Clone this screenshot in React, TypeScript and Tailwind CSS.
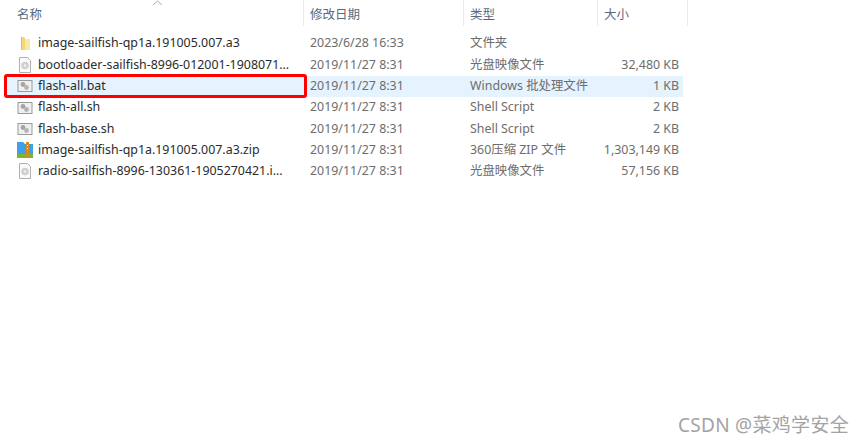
const FONT = "font-['Noto_Sans','Noto_Sans_CJK_SC',sans-serif]";

type Kind = 'folder' | 'disc' | 'script' | 'zip';

interface Row {
  name: string;
  date: string;
  type: string;
  size?: string;
  kind: Kind;
  selected?: boolean;
}

const ROWS: Row[] = [
  { name: 'image-sailfish-qp1a.191005.007.a3', date: '2023/6/28 16:33', type: '文件夹', kind: 'folder' },
  { name: 'bootloader-sailfish-8996-012001-1908071...', date: '2019/11/27 8:31', type: '光盘映像文件', size: '32,480 KB', kind: 'disc' },
  { name: 'flash-all.bat', date: '2019/11/27 8:31', type: 'Windows 批处理文件', size: '1 KB', kind: 'script', selected: true },
  { name: 'flash-all.sh', date: '2019/11/27 8:31', type: 'Shell Script', size: '2 KB', kind: 'script' },
  { name: 'flash-base.sh', date: '2019/11/27 8:31', type: 'Shell Script', size: '2 KB', kind: 'script' },
  { name: 'image-sailfish-qp1a.191005.007.a3.zip', date: '2019/11/27 8:31', type: '360压缩 ZIP 文件', size: '1,303,149 KB', kind: 'zip' },
  { name: 'radio-sailfish-8996-130361-1905270421.i...', date: '2019/11/27 8:31', type: '光盘映像文件', size: '57,156 KB', kind: 'disc' },
];

function FileIcon({ kind }: { kind: Kind }) {
  if (kind === 'folder') {
    return (
      <svg width="16" height="16" viewBox="0 0 16 16">
        <path d="M4 1h3l1 1v12H4z" fill="#f5d67a" />
        <path d="M8 3h5v11H8z" fill="#fbe7a6" />
        <path d="M4 1h1v13H4z" fill="#e8bd52" />
      </svg>
    );
  }
  if (kind === 'disc') {
    return (
      <svg width="16" height="16" viewBox="0 0 16 16">
        <path d="M2.5 0.5h8l3 3v12h-11z" fill="#fafafa" stroke="#b0b0b0" />
        <circle cx="8" cy="8.5" r="3.8" fill="#cfcfcf" />
        <circle cx="8" cy="8.5" r="1.2" fill="#f4f4f4" />
      </svg>
    );
  }
  if (kind === 'script') {
    return (
      <svg width="16" height="16" viewBox="0 0 16 16">
        <rect x="1" y="2.5" width="14" height="11" fill="#f0f0f0" stroke="#9a9a9a" />
        <circle cx="6" cy="6.5" r="2.4" fill="#a4a4a4" />
        <circle cx="9.5" cy="9.5" r="2.4" fill="#b4b4b4" />
      </svg>
    );
  }
  return (
    <svg width="16" height="16" viewBox="0 0 16 16">
      <path d="M0 0h6l2 2h8v11H0z" fill="#3f9fe8" />
      <path d="M0 12h16v4H0z" fill="#76b82a" />
      <path d="M9 0h3v16H9z" fill="#d98a1f" />
      <path d="M10 3h1v1h-1zM10 6h1v1h-1z" fill="#fff3c4" />
    </svg>
  );
}

function HeaderCell({ label, className }: { label: string; className: string }) {
  return (
    <div className={`h-[26px] border-r border-[#ebebeb] flex items-center pt-[4px] text-[12.5px] text-[#5a6a7e] ${className}`}>
      {label}
    </div>
  );
}

export default function App() {
  return (
    <div className={`relative w-[865px] h-[444px] overflow-hidden bg-white ${FONT}`}>
      <div className="grid grid-cols-[304px_160px_134px_90px] w-[688px]">
        <HeaderCell label="名称" className="pl-[17px]" />
        <HeaderCell label="修改日期" className="pl-[6px]" />
        <HeaderCell label="类型" className="pl-[6px]" />
        <HeaderCell label="大小" className="pl-[6px]" />
      </div>

      {/* sort arrow */}
      <svg className="absolute left-[152px] top-0" width="11" height="6" viewBox="0 0 11 6" fill="none" stroke="#a5adb6">
        <path d="M1 5l4.5-4 4.5 4" />
      </svg>

      <div className="mt-[7px] flex flex-col w-[678px] ml-[5px]">
        {ROWS.map((row) => (
          <div
            key={row.name}
            className={`grid grid-cols-[299px_160px_134px_85px] h-[21.3px] items-center text-[12.4px] leading-none text-[#6d6d6d] ${row.selected ? 'bg-[#e5f3ff]' : ''}`}
          >
            <div className="flex items-center pl-[12px] gap-[5px] text-[#2b2b2b] whitespace-nowrap">
              <FileIcon kind={row.kind} />
              <span>{row.name}</span>
            </div>
            <div className="pl-[6px] whitespace-nowrap">{row.date}</div>
            <div className="pl-[6px] whitespace-nowrap">{row.type}</div>
            <div className="text-right pr-[4px] whitespace-nowrap">{row.size}</div>
          </div>
        ))}
      </div>

      {/* red annotation box */}
      <div className="absolute left-[4px] top-[74px] w-[303px] h-[24px] border-[3px] border-[#ff0000] rounded-[3px]" />

      {/* watermark */}
      <div className="absolute right-[16px] top-[413px] text-[19px] leading-[24px] tracking-[0.3px] text-[#a3a3a3] whitespace-nowrap">
        CSDN @菜鸡学安全
      </div>
    </div>
  );
}
